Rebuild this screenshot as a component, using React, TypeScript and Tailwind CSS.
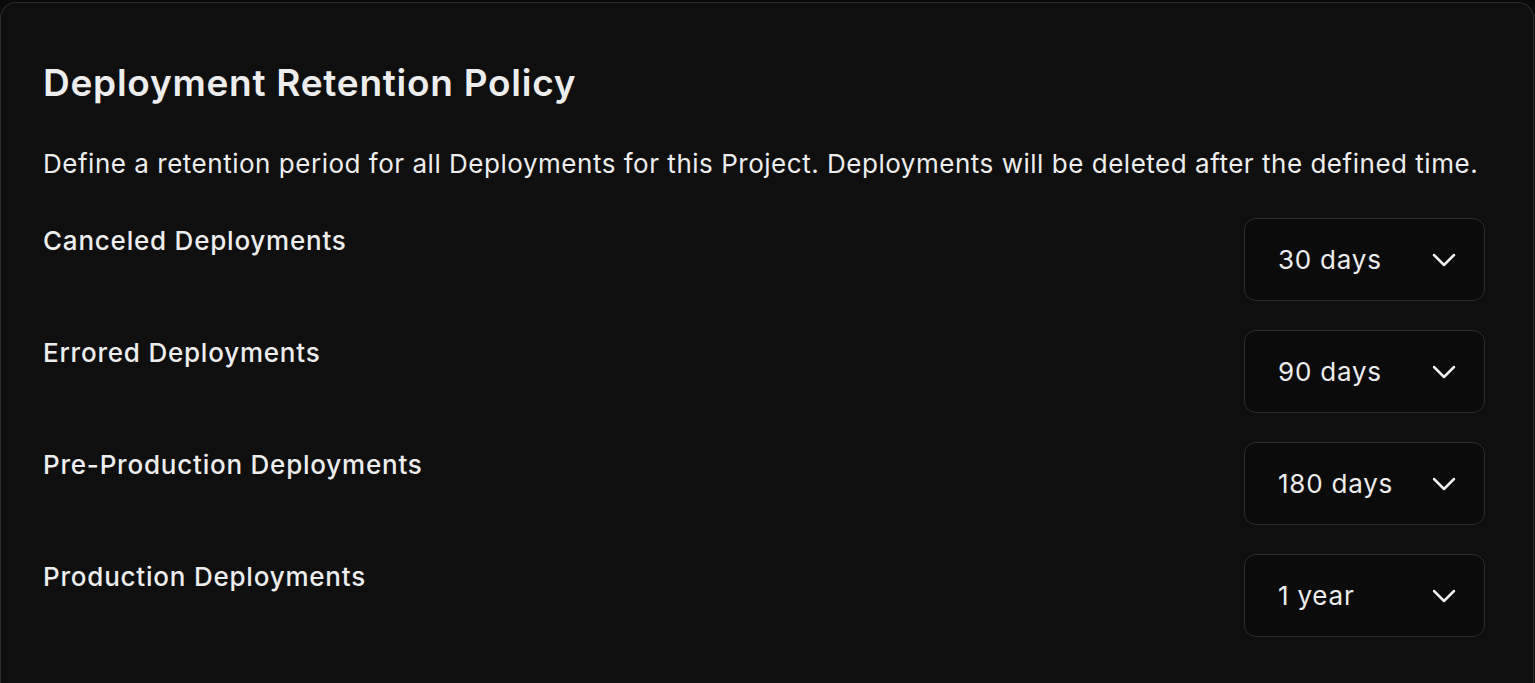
import { ChevronDown } from "lucide-react";

const rows = [
  { label: "Canceled Deployments", value: "30 days" },
  { label: "Errored Deployments", value: "90 days" },
  { label: "Pre-Production Deployments", value: "180 days" },
  { label: "Production Deployments", value: "1 year" },
];

export default function App() {
  return (
    <div className="flex h-screen flex-col overflow-hidden bg-[#0a0a0a] pt-[2px] pr-[1px] font-['Inter',sans-serif]">
      <div className="flex-1 rounded-t-2xl border border-b-0 border-[#2e2e2e] bg-[#0f0f0f] pl-[42px] pr-[48px] pt-[58px]">
        <h1 className="text-[37px] leading-[44px] font-semibold text-[#ededed] tracking-[0.02em]">
          Deployment Retention Policy
        </h1>
        <p className="mt-[43px] text-[26px] leading-[32px] text-[#ededed] tracking-[0.02em]">
          Define a retention period for all Deployments for this Project. Deployments will be deleted after the defined time.
        </p>
        <div className="mt-[38px] flex flex-col gap-[29px]">
          {rows.map((row) => (
            <div key={row.label} className="flex items-start justify-between">
              <span className="pt-[7px] text-[26px] leading-[32px] font-medium text-[#ededed] tracking-[0.03em]">
                {row.label}
              </span>
              <button className="flex h-[83px] w-[241px] items-center justify-between rounded-xl border border-[#2e2e2e] bg-[#0b0b0b] pl-[33px] pr-[20px] text-[26px] text-[#ededed] tracking-[0.03em]">
                <span>{row.value}</span>
                <ChevronDown className="h-10 w-10" strokeWidth={1.5} />
              </button>
            </div>
          ))}
        </div>
      </div>
    </div>
  );
}
